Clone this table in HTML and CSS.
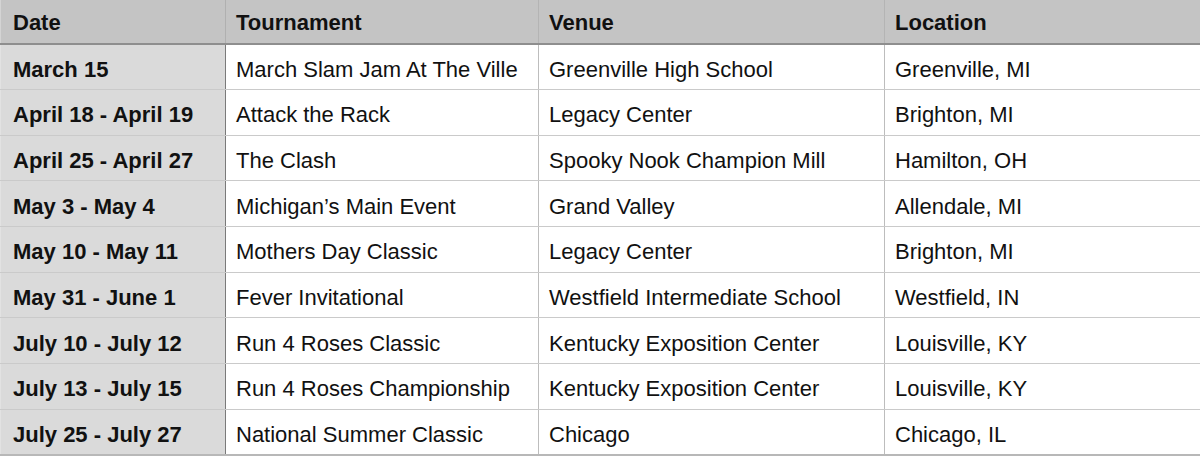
FILE: index.html
```html
<!DOCTYPE html>
<html>
<head>
<meta charset="utf-8">
<link rel="stylesheet" href="styles.css">
</head>
<body>
<table class="sched">
  <colgroup>
    <col class="c1"><col class="c2"><col class="c3"><col class="c4">
  </colgroup>
  <thead>
    <tr><th>Date</th><th>Tournament</th><th>Venue</th><th>Location</th></tr>
  </thead>
  <tbody>
    <tr><td class="date">March 15</td><td>March Slam Jam At The Ville</td><td>Greenville High School</td><td>Greenville, MI</td></tr>
    <tr><td class="date">April 18 - April 19</td><td>Attack the Rack</td><td>Legacy Center</td><td>Brighton, MI</td></tr>
    <tr><td class="date">April 25 - April 27</td><td>The Clash</td><td>Spooky Nook Champion Mill</td><td>Hamilton, OH</td></tr>
    <tr><td class="date">May 3 - May 4</td><td>Michigan’s Main Event</td><td>Grand Valley</td><td>Allendale, MI</td></tr>
    <tr><td class="date">May 10 - May 11</td><td>Mothers Day Classic</td><td>Legacy Center</td><td>Brighton, MI</td></tr>
    <tr><td class="date">May 31 - June 1</td><td>Fever Invitational</td><td>Westfield Intermediate School</td><td>Westfield, IN</td></tr>
    <tr><td class="date">July 10 - July 12</td><td>Run 4 Roses Classic</td><td>Kentucky Exposition Center</td><td>Louisville, KY</td></tr>
    <tr><td class="date">July 13 - July 15</td><td>Run 4 Roses Championship</td><td>Kentucky Exposition Center</td><td>Louisville, KY</td></tr>
    <tr><td class="date">July 25 - July 27</td><td>National Summer Classic</td><td>Chicago</td><td>Chicago, IL</td></tr>
  </tbody>
</table>
</body>
</html>
```
FILE: styles.css
```css
html, body {
  margin: 0;
  padding: 0;
  background: #ffffff;
}
.sched {
  width: 1200px;
  border-collapse: collapse;
  table-layout: fixed;
  font-family: "Liberation Sans", Arial, sans-serif;
  font-size: 22px;
  color: #111;
}
.c1 { width: 225px; }
.c2 { width: 313px; }
.c3 { width: 346px; }
.c4 { width: 316px; }
.sched th {
  background: #c4c4c4;
  text-align: left;
  font-weight: bold;
  height: 44px;
  padding: 2px 10px 0;
  border-left: 1px solid #b4b4b4;
  border-bottom: 2px solid #8e8e8e;
  box-sizing: border-box;
  white-space: nowrap;
}
.sched th:first-child {
  padding-left: 12px;
  border-left: 1px solid #d4d4d4;
}
.sched td {
  height: 45.67px;
  padding: 6px 10px 0;
  border-left: 1px solid #bdbdbd;
  border-bottom: 1px solid #cacaca;
  box-sizing: border-box;
  white-space: nowrap;
}
.sched tbody tr:last-child td {
  border-bottom: 2px solid #b8b8b8;
}
.sched td.date {
  background: #dadada;
  font-weight: bold;
  padding-left: 12px;
  border-left: 1px solid #e2e2e2;
}
.sched td:nth-child(2) {
  border-left: 1px solid #7a7a7a;
}
.sched th:nth-child(2) {
  border-left: 1px solid #b0b0b0;
}
```
